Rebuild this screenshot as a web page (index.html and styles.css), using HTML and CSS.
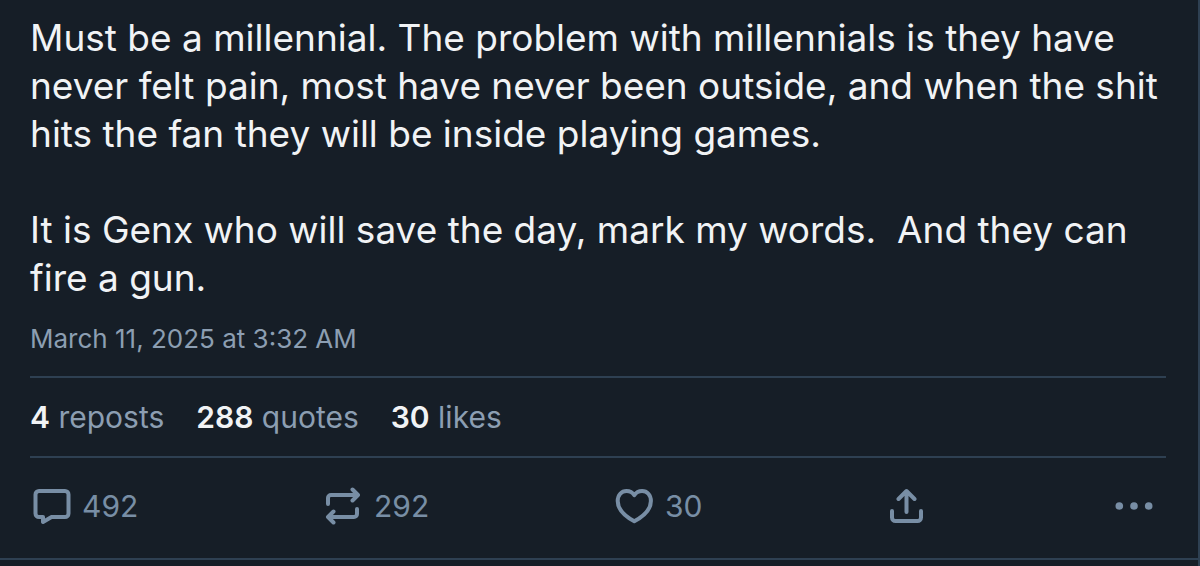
FILE: index.html
```html
<!DOCTYPE html>
<html lang="en">
<head>
  <meta charset="UTF-8">
  <title>Post</title>
  <meta name="viewport" content="width=device-width, initial-scale=1">
  <link rel="stylesheet" href="styles.css">
</head>
<body>
  <main class="feed">
    <article class="post">
      <p class="post-text">Must be a millennial. The problem with millennials is they have never felt pain, most have never been outside, and when the shit hits the fan they will be inside playing games.

It is Genx who will save the day, mark my words.&nbsp; And they can fire a gun.</p>
      <time class="post-date" datetime="2025-03-11T03:32">March 11, 2025 at 3:32 AM</time>
      <div class="stats">
        <a class="stat" href="#"><strong>4</strong> reposts</a>
        <a class="stat" href="#"><strong>288</strong> quotes</a>
        <a class="stat" href="#"><strong>30</strong> likes</a>
      </div>
      <div class="actions">
        <button class="action" type="button" aria-label="Reply, 492">
          <svg class="icon" viewBox="0 0 40 40"><path d="M7 5h26a3.500 3.500 0 0 1 3.500 3.500v19a3.500 3.500 0 0 1-3.500 3.500H19.500L11 36v-5H7a3.500 3.500 0 0 1-3.500-3.500v-19A3.500 3.500 0 0 1 7 5z"/></svg>
          <span>492</span>
        </button>
        <button class="action" type="button" aria-label="Repost, 292">
          <svg class="icon" viewBox="0 0 40 40"><path d="M28.500 3.500L34 9l-5.500 5.500M33 9H7a3 3 0 0 0-3 3v6M9.500 25.500L4 31l5.500 5.500M5 31h25a3 3 0 0 0 3-3v-5"/></svg>
          <span>292</span>
        </button>
        <button class="action" type="button" aria-label="Like, 30">
          <svg class="icon" viewBox="0 0 40 40"><path d="M19.300 35.300C9.500 30 2.700 23 2.700 15 2.700 9 6.500 5 11.500 5c3.200 0 6 1.400 7.800 4.200C21.100 6.400 23.900 5 27.100 5c5 0 8.800 4 8.800 10 0 8-6.800 15-16.600 20.300z"/></svg>
          <span>30</span>
        </button>
        <button class="action" type="button" aria-label="Share">
          <svg class="icon" viewBox="0 0 40 40"><path d="M18.500 26V5M10.500 13l8-8 8 8M4 25v6.500A3.500 3.500 0 0 0 7.500 35h22a3.500 3.500 0 0 0 3.500-3.500V25"/></svg>
        </button>
        <button class="action" type="button" aria-label="More options">
          <svg class="icon icon-dots" viewBox="0 0 40 40"><circle cx="5.300" cy="20" r="3.800"/><circle cx="20" cy="20" r="3.800"/><circle cx="34.700" cy="20" r="3.800"/></svg>
        </button>
      </div>
    </article>
  </main>
</body>
</html>
```
FILE: styles.css
```css
body {
  margin: 0;
  background: #161e27;
  color: #f1f3f5;
  font-family: Inter, sans-serif;
}
.feed {
  box-sizing: border-box;
  min-height: 100vh;
  border-right: 2px solid #2e4052;
}
.post {
  padding: 14px 32px 0 30px;
  border-bottom: 2px solid #2e4052;
}
.post-text {
  margin: 0;
  font-size: 37px;
  line-height: 48px;
  white-space: pre-wrap;
}
.post-date {
  display: block;
  margin-top: 20px;
  font-size: 26px;
  line-height: 34px;
  color: #8c9eb2;
}
.stats {
  display: flex;
  gap: 32px;
  margin-top: 20px;
  padding: 20px 0;
  border-top: 2px solid #2e4052;
  border-bottom: 2px solid #2e4052;
  font-size: 30px;
  line-height: 38px;
}
.stat {
  color: #8c9eb2;
  text-decoration: none;
}
.stat strong {
  color: #f1f3f5;
  font-weight: 600;
}
.actions {
  display: flex;
  justify-content: space-between;
  padding: 28px 12px 32px 2px;
}
.action {
  display: flex;
  align-items: center;
  gap: 10px;
  padding: 0;
  border: 0;
  background: none;
  color: #788ea5;
  font: inherit;
  font-size: 30px;
  line-height: 40px;
  cursor: pointer;
}
.icon {
  width: 40px;
  height: 40px;
  fill: none;
  stroke: currentColor;
  stroke-width: 4;
  stroke-linecap: round;
  stroke-linejoin: round;
}
.icon-dots {
  fill: currentColor;
  stroke: none;
}
```
